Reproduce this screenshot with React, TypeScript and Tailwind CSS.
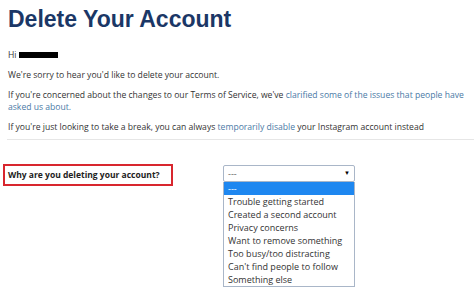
import React from "react";

const REASONS = [
  "Trouble getting started",
  "Created a second account",
  "Privacy concerns",
  "Want to remove something",
  "Too busy/too distracting",
  "Can't find people to follow",
  "Something else",
];

export default function App() {
  return (
    <div className="w-[474px] h-[293px] overflow-hidden bg-white text-[#333] font-['Open_Sans',sans-serif]">
      <div className="pl-2 pt-[5px]">
        <h1 className="font-['Liberation_Sans',Arial,sans-serif] font-bold text-[23px] leading-[28px] text-[#1b3766]">
          Delete Your Account
        </h1>

        {/* Greeting + body copy */}
        <div className="mt-[16px] text-[8.6px] leading-[12px] space-y-[8px] pr-[4px]">
          <p className="flex items-center">
            Hi<span className="ml-[2px] inline-block w-[39px] h-[6px] bg-black" />
          </p>
          <p>We're sorry to hear you'd like to delete your account.</p>
          <p>
            If you're concerned about the changes to our Terms of Service, we've{" "}
            <a className="text-[#4a7aa6]">clarified some of the issues that people have asked us about.</a>
          </p>
          <p>
            If you're just looking to take a break, you can always{" "}
            <a className="text-[#4a7aa6]">temporarily disable</a> your Instagram account instead
          </p>
        </div>
      </div>

      <div className="ml-[7px] mt-[6px] border-t border-[#e6e6e6]" />

      {/* Reason form */}
      <div className="flex items-start mt-[24px] pl-[3px]">
        <div className="w-[170px] h-[22px] border-2 border-[#d8262e] flex items-center pl-[3px]">
          <span className="font-bold text-[8.5px] text-[#222]">Why are you deleting your account?</span>
        </div>
        <div className="relative ml-[50px] mt-[1px] w-[132px]">
          <div className="h-[17px] border border-[#a9b6c8] rounded-[2px] flex items-center justify-between pl-[4px] pr-[4px] text-[9px] text-[#666]">
            <span>---</span>
            <span className="text-[6px] text-black">▼</span>
          </div>
          <ul className="absolute left-0 top-[17px] w-full border border-t-0 border-[#a9b6c8] bg-white text-[9px] leading-[13px] text-[#333]">
            <li className="bg-[#1e87f0] text-white px-[4px]">---</li>
            {REASONS.map((r) => (
              <li key={r} className="px-[4px] whitespace-nowrap">
                {r}
              </li>
            ))}
          </ul>
        </div>
      </div>
    </div>
  );
}
